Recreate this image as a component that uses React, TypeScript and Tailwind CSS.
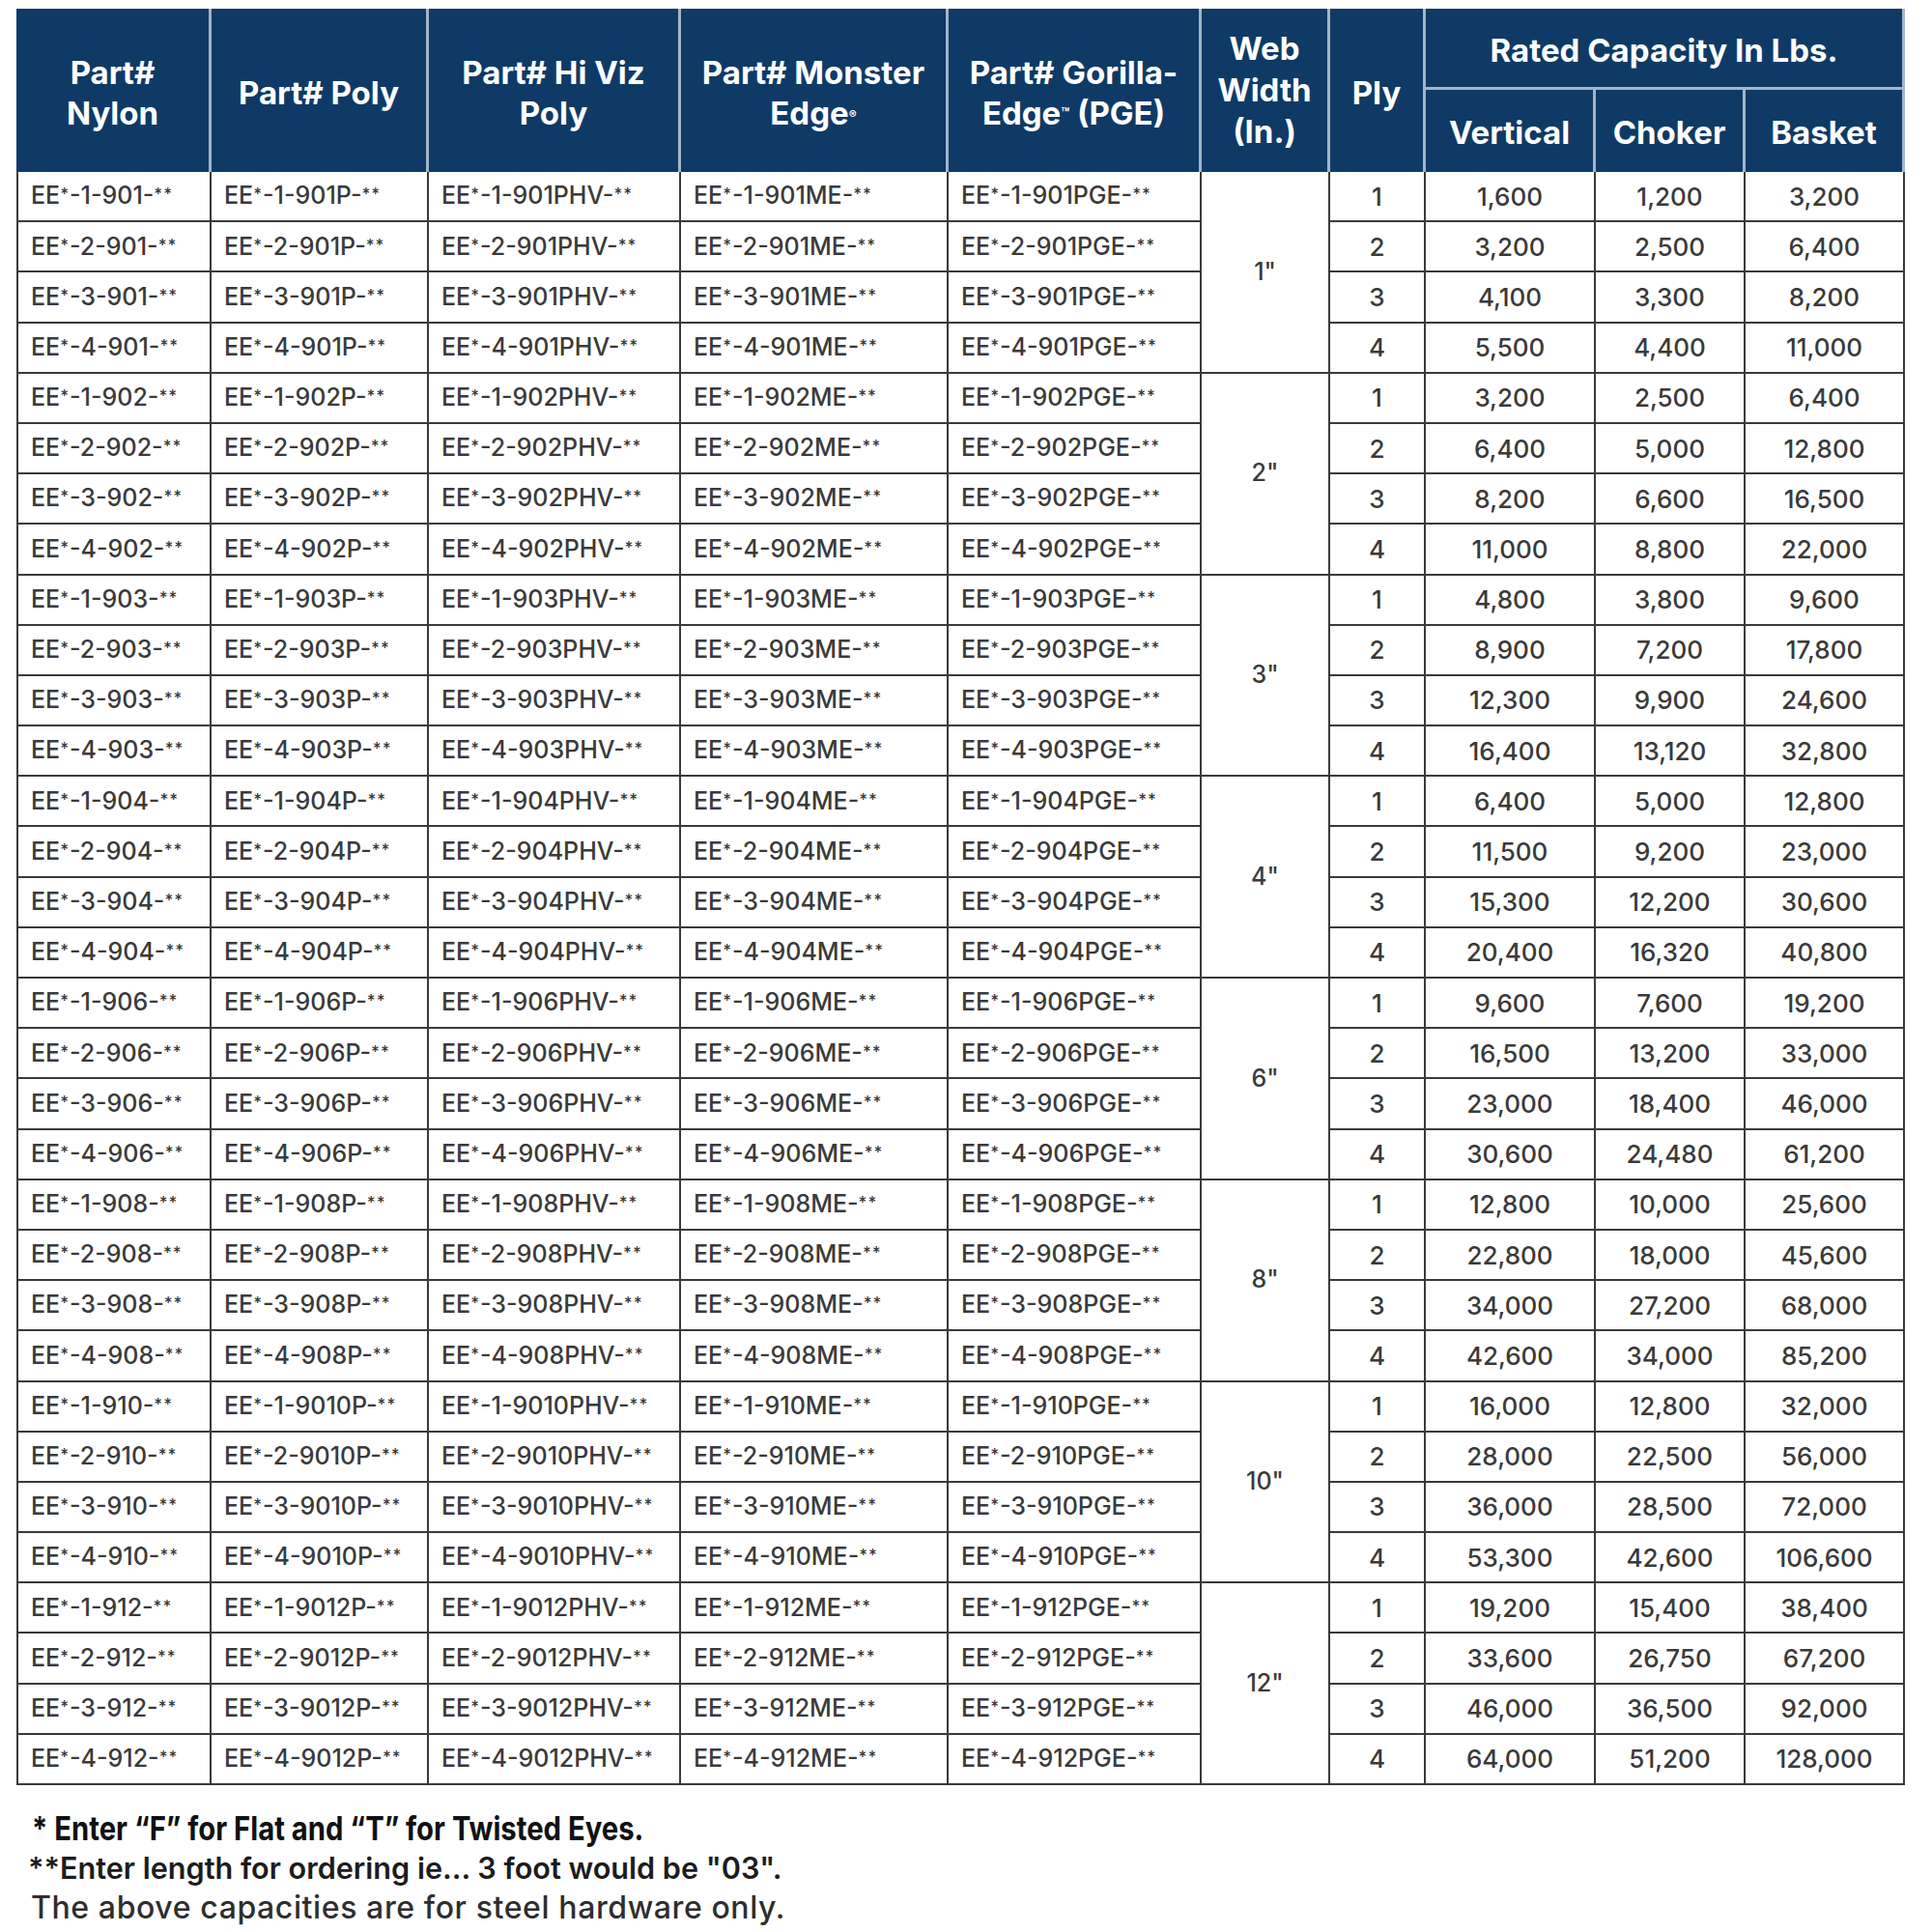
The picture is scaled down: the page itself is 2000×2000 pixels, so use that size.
import React from "react";

const sizes = [1, 2, 3, 4, 6, 8, 10, 12];

// rated capacity per web width, ply 1..4 -> [vertical, choker, basket]
const capacity: Record<number, number[][]> = {
  1: [[1600, 1200, 3200], [3200, 2500, 6400], [4100, 3300, 8200], [5500, 4400, 11000]],
  2: [[3200, 2500, 6400], [6400, 5000, 12800], [8200, 6600, 16500], [11000, 8800, 22000]],
  3: [[4800, 3800, 9600], [8900, 7200, 17800], [12300, 9900, 24600], [16400, 13120, 32800]],
  4: [[6400, 5000, 12800], [11500, 9200, 23000], [15300, 12200, 30600], [20400, 16320, 40800]],
  6: [[9600, 7600, 19200], [16500, 13200, 33000], [23000, 18400, 46000], [30600, 24480, 61200]],
  8: [[12800, 10000, 25600], [22800, 18000, 45600], [34000, 27200, 68000], [42600, 34000, 85200]],
  10: [[16000, 12800, 32000], [28000, 22500, 56000], [36000, 28500, 72000], [53300, 42600, 106600]],
  12: [[19200, 15400, 38400], [33600, 26750, 67200], [46000, 36500, 92000], [64000, 51200, 128000]],
};

const fmt = (n: number) => n.toLocaleString("en-US");

const th = "border-r-[3px] border-[#a3b5c9] bg-[#0f3a66] text-center align-middle font-bold text-white";
const td = "h-[52.2px] border-r-2 border-b-2 border-[#3a3a3a] align-middle";
const part = td + " pl-[13px] text-left";
const num = td + " text-center text-[26px]";

// the asterisks in the part numbers are printed small and raised
function PartNo({ text }: { text: string }) {
  return (
    <>
      {text.split(/(\*+)/).map((s, i) =>
        s.startsWith("*") ? (
          <span key={i} className="relative -top-[4px] text-[17px] tracking-[1px]">{s}</span>
        ) : (
          <span key={i}>{s}</span>
        )
      )}
    </>
  );
}

export default function App() {
  return (
    <div className="min-h-screen bg-white pl-[17px] pt-[9px] font-['Inter',sans-serif]">
      <table className="table-fixed border-separate border-spacing-0 text-[25px] text-[#3a3a3a]">
        <colgroup>
          <col className="w-[202px]" />
          <col className="w-[225px]" />
          <col className="w-[261px]" />
          <col className="w-[277px]" />
          <col className="w-[262px]" />
          <col className="w-[133px]" />
          <col className="w-[99px]" />
          <col className="w-[176px]" />
          <col className="w-[155px]" />
          <col className="w-[165px]" />
        </colgroup>
        <thead className="text-[33px] leading-[42px]">
          <tr className="h-[84px]">
            <th rowSpan={2} className={th + " pt-[4px]"}>Part#<br />Nylon</th>
            <th rowSpan={2} className={th + " pt-[4px]"}>Part# Poly</th>
            <th rowSpan={2} className={th + " pt-[4px]"}>Part# Hi Viz<br />Poly</th>
            <th rowSpan={2} className={th + " pt-[4px]"}>Part# Monster<br />Edge<sup className="text-[12px]">®</sup></th>
            <th rowSpan={2} className={th + " pt-[4px]"}>Part# Gorilla-<br />Edge<sup className="text-[14px]">™</sup> (PGE)</th>
            <th rowSpan={2} className={th + " leading-[43px]"}>Web<br />Width<br />(In.)</th>
            <th rowSpan={2} className={th + " pt-[4px]"}>Ply</th>
            <th colSpan={3} className={th + " border-r-0 border-b-[3px] pt-[4px]"}>Rated Capacity In Lbs.</th>
          </tr>
          <tr className="h-[85px]">
            <th className={th + " pt-[3px]"}>Vertical</th>
            <th className={th + " pt-[3px]"}>Choker</th>
            <th className={th + " border-r-0 pt-[3px]"}>Basket</th>
          </tr>
        </thead>
        <tbody className="font-medium">
          {sizes.map((w) =>
            capacity[w].map((caps, i) => {
              const p = i + 1;
              const code = w < 10 ? `90${w}` : `9${w}`;
              return (
                <tr key={`${w}-${p}`}>
                  <td className={part + " border-l-2"}><PartNo text={`EE*-${p}-${code}-**`} /></td>
                  <td className={part}><PartNo text={`EE*-${p}-90${w}P-**`} /></td>
                  <td className={part}><PartNo text={`EE*-${p}-90${w}PHV-**`} /></td>
                  <td className={part}><PartNo text={`EE*-${p}-${code}ME-**`} /></td>
                  <td className={part}><PartNo text={`EE*-${p}-${code}PGE-**`} /></td>
                  {i === 0 && (
                    <td rowSpan={4} className={td + " text-center"}>{`${w}"`}</td>
                  )}
                  <td className={num}>{p}</td>
                  <td className={num}>{fmt(caps[0])}</td>
                  <td className={num}>{fmt(caps[1])}</td>
                  <td className={num}>{fmt(caps[2])}</td>
                </tr>
              );
            })
          )}
        </tbody>
      </table>

      <div className="mt-[24px] leading-[41px]">
        <p className="ml-[16px] text-[34px]">
          <span className="inline-block origin-left scale-x-[0.86] font-bold text-[#111]">
            * Enter “F” for Flat and “T” for Twisted Eyes.
          </span>
        </p>
        <p className="ml-[12px] text-[30.6px] font-semibold text-[#1c1c1c]">**Enter length for ordering ie... 3 foot would be "03".</p>
        <p className="ml-[15px] text-[32px] font-medium tracking-[0.6px] text-[#2e2e2e]">The above capacities are for steel hardware only.</p>
      </div>
    </div>
  );
}
